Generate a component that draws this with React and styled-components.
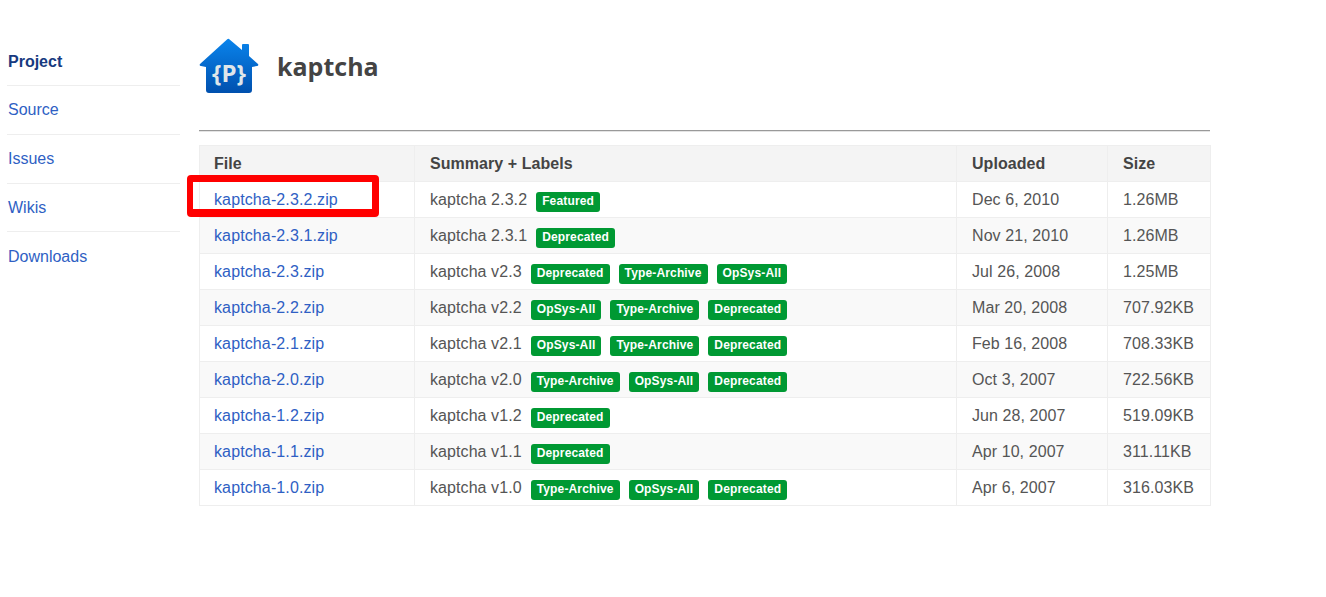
import React from 'react';
import styled, { createGlobalStyle } from 'styled-components';

const releases = [
  { file: 'kaptcha-2.3.2.zip', summary: 'kaptcha 2.3.2', labels: ['Featured'], date: 'Dec 6, 2010', size: '1.26MB', marked: true },
  { file: 'kaptcha-2.3.1.zip', summary: 'kaptcha 2.3.1', labels: ['Deprecated'], date: 'Nov 21, 2010', size: '1.26MB' },
  { file: 'kaptcha-2.3.zip', summary: 'kaptcha v2.3', labels: ['Deprecated', 'Type-Archive', 'OpSys-All'], date: 'Jul 26, 2008', size: '1.25MB' },
  { file: 'kaptcha-2.2.zip', summary: 'kaptcha v2.2', labels: ['OpSys-All', 'Type-Archive', 'Deprecated'], date: 'Mar 20, 2008', size: '707.92KB' },
  { file: 'kaptcha-2.1.zip', summary: 'kaptcha v2.1', labels: ['OpSys-All', 'Type-Archive', 'Deprecated'], date: 'Feb 16, 2008', size: '708.33KB' },
  { file: 'kaptcha-2.0.zip', summary: 'kaptcha v2.0', labels: ['Type-Archive', 'OpSys-All', 'Deprecated'], date: 'Oct 3, 2007', size: '722.56KB' },
  { file: 'kaptcha-1.2.zip', summary: 'kaptcha v1.2', labels: ['Deprecated'], date: 'Jun 28, 2007', size: '519.09KB' },
  { file: 'kaptcha-1.1.zip', summary: 'kaptcha v1.1', labels: ['Deprecated'], date: 'Apr 10, 2007', size: '311.11KB' },
  { file: 'kaptcha-1.0.zip', summary: 'kaptcha v1.0', labels: ['Type-Archive', 'OpSys-All', 'Deprecated'], date: 'Apr 6, 2007', size: '316.03KB' },
];

const navItems = ['Source', 'Issues', 'Wikis', 'Downloads'];

const Logo = () => (
  <svg width="60" height="58" viewBox="0 -1 60 58">
    <defs>
      <linearGradient id="house" x1="0" y1="0" x2="0" y2="1">
        <stop offset="0" stopColor="#0a84ec" />
        <stop offset="1" stopColor="#0050ae" />
      </linearGradient>
    </defs>
    <path
      d="M30 1 L43 12 V7 Q43 6 44 6 H49 Q50 6 50 7 V18 L59 26 Q60 28 58 28 L53 29 V52 Q53 55 50 55 H10 Q7 55 7 52 V29 L2 28 Q0 28 1 26 L28 1.500 Q29 .5 30 1 Z"
      fill="url(#house)"
    />
    <text x="30" y="44" textAnchor="middle" fontFamily="'Open Sans', sans-serif" fontSize="24" fontWeight="700" fill="#dfe6ea">
      {'{P}'}
    </text>
  </svg>
);

const App = () => {
  return (
    <Page>
      <GlobalStyle />
      <Sidebar>
        <NavItem $active>Project</NavItem>
        {navItems.map((item) => (
          <NavItem key={item}>{item}</NavItem>
        ))}
      </Sidebar>
      <Main>
        <Header>
          <Logo />
          <Title>kaptcha</Title>
        </Header>
        <Rule />
        <Table>
          <colgroup>
            <col width="215" />
            <col width="542" />
            <col width="151" />
            <col width="103" />
          </colgroup>
          <thead>
            <tr>
              <Th>File</Th>
              <Th>Summary + Labels</Th>
              <Th>Uploaded</Th>
              <Th>Size</Th>
            </tr>
          </thead>
          <tbody>
            {releases.map((r) => (
              <Row key={r.file}>
                <Td>
                  <FileLink>{r.file}</FileLink>
                  {r.marked && <Highlight />}
                </Td>
                <Td>
                  <SummaryCell>
                    <span>{r.summary}</span>
                    {r.labels.map((label) => (
                      <Label key={label}>{label}</Label>
                    ))}
                  </SummaryCell>
                </Td>
                <Td>{r.date}</Td>
                <Td>{r.size}</Td>
              </Row>
            ))}
          </tbody>
        </Table>
      </Main>
    </Page>
  );
};

export default App;

const GlobalStyle = createGlobalStyle`
  html, body {
    margin: 0;
    background: #fff;
  }
  body {
    font-family: 'Liberation Sans', Arial, sans-serif;
    font-size: 16px;
    color: #444;
  }
`;

const Page = styled.div`
  display: flex;
  align-items: flex-start;
  width: 1326px;
  height: 597px;
  overflow: hidden;
  box-sizing: border-box;
  padding: 37px 0 0 7px;
`;

const Sidebar = styled.nav`
  width: 173px;
  flex-shrink: 0;
  padding-top: 0.2px;
`;

const NavItem = styled.div`
  height: 47.8px;
  line-height: ${(p) => (p.$active ? '50px' : '48px')};
  padding-left: 1px;
  border-bottom: 1px solid #eee;
  color: ${(p) => (p.$active ? '#173a80' : '#2f5fc4')};
  font-weight: ${(p) => (p.$active ? 'bold' : 'normal')};

  &:last-child {
    line-height: 50px;
    border-bottom: none;
  }
`;

const Main = styled.main`
  width: 1011px;
  margin-left: 19px;
`;

const Header = styled.header`
  display: flex;
  align-items: center;
  gap: 18px;
  height: 58px;
`;

const Title = styled.h1`
  margin: 0;
  font-family: 'Open Sans', sans-serif;
  font-size: 25px;
  font-weight: 700;
  color: #444;
`;

const Rule = styled.div`
  height: 1px;
  margin-top: 35px;
  background: #999;
  border-bottom: 1px solid #e4e4e4;
`;

const Table = styled.table`
  width: 1011px;
  margin-top: 13px;
  border-collapse: collapse;
  table-layout: fixed;
`;

const Th = styled.th`
  height: 36px;
  padding: 0 15px;
  box-sizing: border-box;
  background: #f4f4f4;
  border: 1px solid #eee;
  text-align: left;
  font-weight: bold;
  letter-spacing: 0.05px;
  color: #444;

  &:first-child {
    padding-left: 14px;
  }
`;

const Row = styled.tr`
  &:nth-child(even) td {
    background: #f9f9f9;
  }
`;

const Td = styled.td`
  position: relative;
  height: 36px;
  padding: 0 15px;
  box-sizing: border-box;
  border: 1px solid #eee;
  white-space: nowrap;
  color: #555;
  letter-spacing: 0.08px;

  &:first-child {
    padding-left: 14px;
  }
`;

const FileLink = styled.span`
  color: #2f5fc4;
  letter-spacing: 0.12px;
`;

const SummaryCell = styled.div`
  display: flex;
  align-items: center;
  gap: 9px;
`;

const Label = styled.span`
  height: 20px;
  line-height: 18px;
  margin-top: 4px;
  padding: 0 6px;
  border-radius: 3px;
  background: #093;
  color: #fff;
  font-size: 12px;
  font-weight: bold;
  letter-spacing: 0.15px;
`;

const Highlight = styled.div`
  position: absolute;
  left: -13px;
  top: -7px;
  width: 192px;
  height: 42px;
  box-sizing: border-box;
  border-style: solid;
  border-color: #f00;
  border-width: 7px 7px 8px 6px;
  border-radius: 4px;
`;
